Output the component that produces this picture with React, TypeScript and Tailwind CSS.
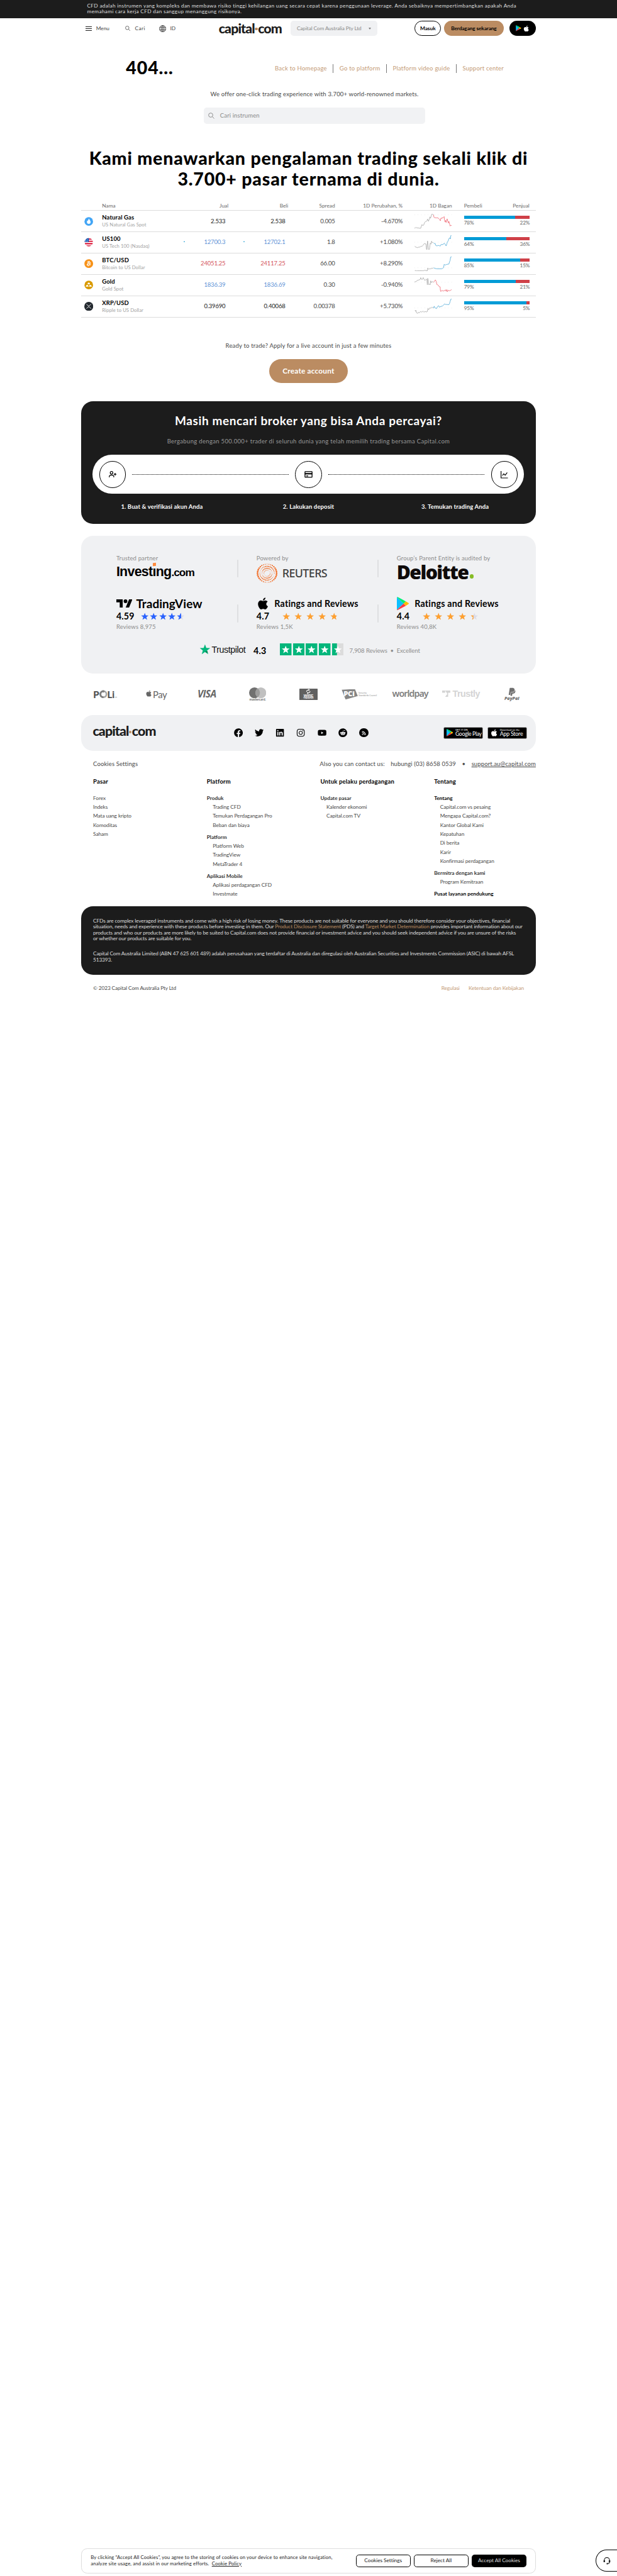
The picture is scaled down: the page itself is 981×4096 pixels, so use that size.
import React from "react";
import { FaApple, FaBitcoin, FaFacebook, FaInstagram, FaLinkedin, FaPaypal, FaReddit, FaRss, FaTwitter, FaYoutube } from "react-icons/fa";

const STAR = "M12 .8l2.9 7.9 8.5.3-6.7 5.2 2.4 8.1L12 17.6l-7.1 4.7 2.4-8.1L.6 9l8.5-.3z";

function Logo() {
  return (
    <div className="flex h-8 w-[170px] items-center whitespace-nowrap text-[36px] leading-8 font-black tracking-[-1.55px] text-[#1c1c1c]">
      capital
      <span className="mx-[1px] mt-1 h-[7px] w-[7px] shrink-0 rounded-full bg-[#bb8c62]" />
      com
    </div>
  );
}

function PlayLogo({ className }: { className: string }) {
  return (
    <svg viewBox="0 0 32 36" className={className}>
      <path d="M0 1v34l18-17z" fill="#0cbfff" />
      <path d="M0 1q1-1.500 3 0l21 11-6 6z" fill="#00ee76" />
      <path d="M0 35q1 1.500 3 0l21-11-6-6z" fill="#ff3a44" />
      <path d="M24 12l7 4.500q2 1.500 0 3L24 24l-6-6z" fill="#ffbc00" />
    </svg>
  );
}

function Search({ className }: { className: string }) {
  return (
    <svg viewBox="0 0 18 18" fill="none" stroke="currentColor" strokeWidth="1.7" className={className}>
      <circle cx="7.200" cy="7.200" r="6" />
      <path d="M11.500 11.500l5.500 5.500" />
    </svg>
  );
}

const charts = [
  {
    dot: 8,
    color: "#ee6470",
    a: "0,113 5,115 12,108 18,113 30,113 36,115 50,116 55,100 60,86 66,94 74,90 80,72 88,62 96,60 100,55 105,42 112,60 118,45 124,24 128,36 134,20 138,4 142,2 146,5 153,8",
    b: "153,8 156,26 160,31 175,32 190,33 200,44 208,56 212,34 218,38 222,30 228,34 238,22 242,55 246,66 250,52 254,70 262,40 268,62 272,74 276,60 282,82 286,98 292,92 298,94",
  },
  {
    dot: 56,
    color: "#4fa9d6",
    a: "3,88 8,95 15,96 22,100 32,96 40,96 48,92 54,88 60,90 66,84 74,72 80,68 92,70 96,110 99,118 102,80 105,46 109,80 112,118 118,118 122,100 126,64 132,72 137,48 142,60 150,58",
    b: "153,62 160,68 166,66 171,82 180,86 190,82 200,84 206,88 212,76 222,74 228,76 236,66 240,64 248,76 254,86 260,70 264,52 270,48 276,28 282,20 288,30 292,2 296,2",
  },
  {
    dot: 90,
    color: "#4fa9d6",
    a: "3,118 8,110 14,116 22,114 40,114 60,113 70,115 80,110 96,112 102,116 106,92 112,102 120,98 130,98 140,94 150,92",
    b: "153,90 165,95 180,98 220,98 226,94 234,88 238,62 246,68 255,64 262,62 276,60 282,40 286,32 290,4 298,2",
  },
  {
    dot: 39,
    color: "#ee6470",
    a: "0,38 6,34 12,36 20,26 30,22 40,20 46,16 50,2 56,16 64,16 70,2 76,14 84,26 90,18 96,14 100,20 103,60 106,8 110,20 114,60 120,54 126,60 130,28 136,42 142,34 152,38",
    b: "153,40 160,32 168,20 174,32 180,58 190,62 200,76 206,76 208,106 212,114 220,104 230,110 242,106 250,100 254,112 260,98 264,116 270,104 280,108 290,104 298,98",
  },
  {
    dot: 74,
    color: "#4fa9d6",
    a: "3,94 8,100 11,92 16,112 24,118 30,110 40,112 50,102 58,108 68,100 76,108 86,102 94,106 102,104 108,78 114,88 122,74 132,76 140,68 150,74",
    b: "153,76 158,60 164,72 176,80 184,64 194,56 200,68 212,62 226,58 234,50 240,42 250,46 260,46 276,48 282,36 286,22 292,4 298,2",
  },
];

function Chart({ i }: { i: number }) {
  const c = charts[i];
  return (
    <svg viewBox="0 0 300 120" className="h-10 w-[100px]" fill="none" strokeWidth="4" strokeLinejoin="round">
      <path d={`M0 ${c.dot}H300`} stroke="#ccc" strokeWidth="3" strokeDasharray="3 24" />
      <polyline points={c.a} stroke="#a6a6a6" />
      <polyline points={c.b} stroke={c.color} />
    </svg>
  );
}

function MarketIcon({ i }: { i: number }) {
  if (i === 2) return <FaBitcoin className="h-6 w-6 text-[#f7931a]" />;
  return (
    <svg viewBox="0 0 24 24" className="h-6 w-6">
      {i === 0 && (
        <>
          <circle cx="12" cy="12" r="11.500" fill="#42a5f5" />
          <path d="M12.500 4c.5 3 4.500 5 4.500 9.500 0 3-2 5-5 5s-5-2-5-5c0-2 1-3 1.700-4.500.6 1 .8 1.500 1.300 2C10 9 11 6.500 12.500 4z" fill="#fff" />
        </>
      )}
      {i === 1 && (
        <>
          <clipPath id="flag">
            <circle cx="12" cy="12" r="11" />
          </clipPath>
          <g clipPath="url(#flag)">
            <path d="M0 0h24v24H0z" fill="#fff" />
            <path d="M0 2h24v3H0zM0 8h24v3H0zM0 14.500h24v3H0zM0 20.500h24v3H0z" fill="#d80027" />
            <path d="M0 0h12v11.500H0z" fill="#0052b4" />
            <path d="M3 4h2v2H3zM7 4h2v2H7zM3 8h2v2H3zM7 8h2v2H7z" fill="#fff" />
          </g>
        </>
      )}
      {i === 3 && (
        <>
          <circle cx="12" cy="12" r="11.500" fill="#d99a00" />
          <path d="M10 6h4l1.500 4h-7zM6 12h4l1.500 4.500h-8zM14 12h4l2.500 4.500h-8z" fill="#fff" />
        </>
      )}
      {i === 4 && (
        <>
          <circle cx="12" cy="12" r="12" fill="#23292f" />
          <path d="M6 6l3.500 3.800q2.500 2.200 5 0L18 6M6 18l3.500-3.800q2.500-2.200 5 0L18 18" fill="none" stroke="#fff" strokeWidth="1.500" />
        </>
      )}
    </svg>
  );
}

const rows = [
  ["Natural Gas", "US Natural Gas Spot", "2.533", "2.538", "0.005", "-4.670%", "78", "22", "text-[#222]"],
  ["US100", "US Tech 100 (Nasdaq)", "12700.3", "12702.1", "1.8", "+1.080%", "64", "36", "text-[#5f93d6]"],
  ["BTC/USD", "Bitcoin to US Dollar", "24051.25", "24117.25", "66.00", "+8.290%", "85", "15", "text-[#d4545b]"],
  ["Gold", "Gold Spot", "1836.39", "1836.69", "0.30", "-0.940%", "79", "21", "text-[#5f93d6]"],
  ["XRP/USD", "Ripple to US Dollar", "0.39690", "0.40068", "0.00378", "+5.730%", "95", "5", "text-[#222]"],
];

const GRID = "grid grid-cols-[56px_179px_159px_160px_125px_181px_132px_224px]";

function Up() {
  return <span className="mt-2 h-0 w-0 border-x-[3px] border-b-[4px] border-x-transparent border-b-[#0a95d0]" />;
}

function Markets() {
  return (
    <section className="mt-[31px] w-[1216px]">
      <div className={`${GRID} h-[26px] items-center border-b border-[#dcdcdc] text-right text-[14px] text-[#6a6a6a]`}>
        <span />
        <span className="text-left">Nama</span>
        <span>Jual</span>
        <span>Beli</span>
        <span>Spread</span>
        <span>1D Perubahan, %</span>
        <span>1D Bagan</span>
        <div className="flex justify-between pr-[17px] pl-8">
          <span>Pembeli</span>
          <span>Penjual</span>
        </div>
      </div>
      {rows.map((r, i) => (
        <div key={r[0]} className={`${GRID} h-[57px] items-center border-b border-[#dcdcdc] text-right text-[16px] tracking-[-0.3px] text-[#484848]`}>
          <div className="pl-2">
            <MarketIcon i={i} />
          </div>
          <div className="pt-[2px] text-left">
            <div className="text-[16px] leading-5 font-bold tracking-[0.2px] text-black">{r[0]}</div>
            <div className="text-[13px] leading-5 tracking-[0.1px] text-[#a3a3a3]">{r[1]}</div>
          </div>
          <div className={`flex justify-between pr-2 pl-[39px] ${r[8]}`}>
            {i === 1 ? <Up /> : <span />}
            {r[2]}
          </div>
          <div className={`flex justify-between pr-2 pl-10 ${r[8]}`}>
            {i === 1 ? <Up /> : <span />}
            {r[3]}
          </div>
          <span>{r[4]}</span>
          <span>{r[5]}</span>
          <div className="flex justify-end">
            <Chart i={i} />
          </div>
          <div className="pr-4 pl-8 text-[14px] text-[#666]">
            <div className="flex h-2 bg-[#cf4048]">
              <div className="bg-[#009bd6]" style={{ width: `${r[6]}%` }} />
            </div>
            <div className="mt-[2px] flex justify-between leading-[18px]">
              <span>{r[6]}%</span>
              <span>{r[7]}%</span>
            </div>
          </div>
        </div>
      ))}
    </section>
  );
}

function Stars({ color, fill, gap }: { color: string; fill: number; gap: string }) {
  return (
    <div className={`flex ${gap}`}>
      {[0, 1, 2, 3, 4].map((i) => (
        <svg key={i} viewBox="0 0 24 23" className="h-5 w-[21px]">
          <path d={STAR} fill="#dcdce6" />
          <clipPath id={`s${color.slice(1)}${Math.round(fill)}${i}`}>
            <path d={`M0 0h${i < 4 ? 24 : fill}v24H0z`} />
          </clipPath>
          <path d={STAR} fill={color} clipPath={`url(#s${color.slice(1)}${Math.round(fill)}${i})`} />
        </svg>
      ))}
    </div>
  );
}

function ReutersMark() {
  const dots: React.ReactNode[] = [];
  const rings = [
    [25.5, 32, 2.3],
    [19.3, 28, 1.7],
    [13.6, 22, 1.6],
    [8.4, 16, 1.1],
  ];
  rings.forEach(([r, n, s], k) => {
    for (let i = 0; i < n; i++) {
      const t = (i / n) * Math.PI * 2;
      const w = k === 0 ? Math.abs(Math.cos(t)) : Math.abs(Math.cos(t - 2.4 + k * 0.5));
      dots.push(<circle key={`${k}-${i}`} cx={28 + r * Math.cos(t)} cy={26 + r * 0.96 * Math.sin(t)} r={s * (0.4 + 0.6 * w)} />);
    }
  });
  return (
    <svg viewBox="0 0 56 52" fill="#f26a21" className="h-[52px] w-14">
      {dots}
    </svg>
  );
}

const RATE = "flex h-8 items-center text-[24px] font-bold text-black";

function Partners() {
  return (
    <section className="mt-8 h-[368px] w-[1216px] rounded-[32px] bg-[#f0f1f3] pt-[50px] text-[16px] tracking-[0.25px] text-[#8c8c8c]">
      <div className="ml-[94px] flex h-[112px]">
        <div className="w-[323px]">
          <div className="h-5 leading-5">Trusted partner</div>
          <div className="mt-[7px] flex h-10 items-center text-[36px] font-bold tracking-[-1.2px] whitespace-nowrap text-black [font-family:'Liberation_Sans',sans-serif]">
            <span>Invest</span>
            <span className="relative">
              ı<span className="absolute top-[3px] left-[1px] h-[8px] w-[8px] -skew-y-6 bg-[#ff8b3d]" />
            </span>
            <span>ng</span>
            <span className="mt-1 text-[29px] tracking-[-1.6px]">.com</span>
          </div>
        </div>
        <div className="mt-[14px] h-12 w-1 rounded bg-[#dedfe1]" />
        <div className="w-[323px] pl-12">
          <div className="h-5 leading-5">Powered by</div>
          <div className="mt-1 flex items-center gap-[13px] text-[30px] leading-[52px] font-medium tracking-[-1px] text-[#404040] [font-family:'Noto_Sans',sans-serif]">
            <ReutersMark />
            REUTERS
          </div>
        </div>
        <div className="mt-[14px] ml-12 h-12 w-1 rounded bg-[#dedfe1]" />
        <div className="pl-12">
          <div className="h-5 leading-5 whitespace-nowrap">Group’s Parent Entity is audited by</div>
          <div className="mt-[6px] flex h-11 items-center text-[51px] leading-[44px] font-extrabold tracking-[-2.7px] text-[#0f0b0b] [font-family:'Open_Sans',sans-serif]">
            Deloitte
            <span className="mt-[22px] ml-1 h-[11px] w-[11px] rounded-full bg-[#86bc25]" />
          </div>
        </div>
      </div>
      <div className="ml-[94px] flex h-[104px]">
        <div className="w-[323px]">
          <div className="mt-[2px] flex h-9 items-center gap-[10px] text-[32px] font-bold tracking-normal whitespace-nowrap text-black">
            <svg viewBox="0 0 43 22" className="h-[22px] w-[43px]">
              <path d="M0 0h17v22H9V8H0zM34 22h-9L34 0h9z" />
              <circle cx="24.500" cy="5" r="5" />
            </svg>
            TradingView
          </div>
          <div className={RATE}>
            <span className="w-[66px]">4.59</span>
            <Stars color="#2962ff" fill={13.5} gap="gap-[3px]" />
          </div>
          <div className="h-6 leading-6">Reviews 8,975</div>
        </div>
        <div className="mt-[22px] h-12 w-1 rounded bg-[#dedfe1]" />
        <div className="w-[323px] pl-12">
          <div className="mt-[2px] flex h-9 items-center text-[24px] font-bold tracking-[0.35px] whitespace-nowrap text-black">
            <FaApple className="mr-[14px] h-9 w-[34px]" />
            Ratings and Reviews
          </div>
          <div className={RATE}>
            <span className="w-[69px]">4.7</span>
            <Stars color="#ffa02f" fill={19} gap="gap-[11px]" />
          </div>
          <div className="h-6 leading-6">Reviews 1,5K</div>
        </div>
        <div className="mt-[22px] ml-12 h-12 w-1 rounded bg-[#dedfe1]" />
        <div className="pl-12">
          <div className="mt-[2px] flex h-9 items-center text-[24px] font-bold tracking-[0.35px] whitespace-nowrap text-black">
            <PlayLogo className="mr-4 h-9 w-8" />
            Ratings and Reviews
          </div>
          <div className={RATE}>
            <span className="w-[69px]">4.4</span>
            <Stars color="#ffa02f" fill={9} gap="gap-[11px]" />
          </div>
          <div className="h-6 leading-6">Reviews 40,8K</div>
        </div>
      </div>
      <div className="mt-[22px] ml-[316px] flex h-8 items-center">
        <svg viewBox="0 0 24 23" className="h-7 w-[30px]">
          <path d={STAR} fill="#04b67b" />
          <path d="M12 17.600l5.500-1.500.6 2.500z" fill="#005128" />
        </svg>
        <span className="mt-1 ml-[3px] w-[112px] text-[24px] tracking-[-0.7px] text-[#111] [font-family:'Liberation_Sans',sans-serif]">Trustpilot</span>
        <span className="mt-2 w-[71px] text-[24px] font-bold text-black">4.3</span>
        <div className="flex gap-[3.7px]">
          {[0, 1, 2, 3, 4].map((i) => (
            <svg key={i} viewBox="0 0 31 32" className="h-8 w-[31px]">
              <path d="M0 0h31v32H0z" fill={i < 4 ? "#04b67b" : "#dcdcdc"} />
              {i === 4 && <path d="M0 0h13v32H0z" fill="#04b67b" />}
              <path d={STAR} transform="translate(4.500 5.500) scale(.92)" fill="#fff" />
            </svg>
          ))}
        </div>
        <span className="mt-2 ml-4 flex gap-2 tracking-[-0.1px]">
          <span>7,908 Reviews</span>
          <span>•</span>
          <span>Excellent</span>
        </span>
      </div>
    </section>
  );
}

function Payments() {
  return (
    <section className="mt-[32px] flex h-12 w-[1224px] items-center">
      <div className="flex w-[136px] items-center justify-center text-[25px] font-black text-[#4f4f4f]">
        P
        <svg viewBox="0 0 22 22" className="h-[22px] w-[22px]" fill="none">
          <circle cx="11" cy="11.500" r="8" stroke="#a6a6a6" strokeWidth="4.500" />
          <path d="M11 19.500a8 8 0 0 1-1-16" stroke="#7d7d7d" strokeWidth="4.500" />
          <path d="M9 0l6 3-5 5z" fill="#7d7d7d" />
        </svg>
        Li
        <span className="mt-4 text-[4px]">TM</span>
      </div>
      <div className="flex w-[136px] items-center justify-center text-[25px] tracking-[-0.8px] text-[#666]">
        <FaApple className="mr-[2px] mb-1 h-[19px] w-[19px]" />
        Pay
      </div>
      <div className="flex w-[136px] items-center justify-center text-[26px] font-bold tracking-[-1px] text-[#666] italic [font-family:'Open_Sans',sans-serif]">
        VISA
      </div>
      <div className="flex w-[136px] flex-col items-center text-[8.5px] leading-[8px] font-bold text-[#666]">
        <svg viewBox="0 0 46 29" className="h-[29px] w-[46px]">
          <circle cx="14.500" cy="14.500" r="14.500" fill="#707070" />
          <circle cx="31.500" cy="14.500" r="14.500" fill="#c0c0c0" />
          <path d="M23 2.700a14.500 14.500 0 0 1 0 23.600 14.500 14.500 0 0 1 0-23.600z" fill="#9c9c9c" />
        </svg>
        mastercard.
      </div>
      <div className="flex w-[136px] justify-center">
        <div className="flex h-[31px] w-[50px] flex-col items-center rounded-[1px] bg-[#606060] pt-px text-white">
          <svg viewBox="0 0 14 16" className="h-[15px] w-[14px]" fill="none" stroke="#fff" strokeWidth="2">
            <path d="M2 9q0-5 7-5.500M12 7q0 5-7 5.500" />
            <path d="M8 1l3 2.500-3 2.500zM6 10l-3 2.500L6 15z" fill="#fff" strokeWidth="1" />
          </svg>
          <span className="text-[10px] leading-[9px] font-bold [font-family:'Liberation_Sans',sans-serif]">WIRE</span>
          <span className="text-[5px] leading-[5px] font-bold [font-family:'Liberation_Sans',sans-serif]">TRANSFER</span>
        </div>
      </div>
      <div className="flex w-[136px] items-center justify-center">
        <div className="h-[28px] w-[43px] shrink-0 bg-[#868686] pt-[5px] pl-[5px] text-[19px] leading-[18px] font-extrabold tracking-[-0.5px] text-white [clip-path:polygon(0_7%,82%_0,100%_67%,24%_100%)] [font-family:'Open_Sans',sans-serif]">
          PCi
        </div>
        <div className="ml-[2px] text-[5.8px] leading-[6.5px] whitespace-nowrap text-[#868686] [font-family:'Noto_Sans',sans-serif]">
          Security
          <br />
          Standards Council
        </div>
      </div>
      <div className="flex w-[136px] items-center justify-center pb-1 text-[24px] font-semibold tracking-[-1.6px] text-[#7f7f7f] [font-family:'Noto_Sans',sans-serif]">
        worldpay
      </div>
      <div className="flex w-[136px] items-center justify-center gap-[6px] pb-[2px] text-[24px] font-bold tracking-[-0.8px] text-[#d4d4d4] [font-family:'Liberation_Sans',sans-serif]">
        <svg viewBox="0 0 22 17" className="h-[17px] w-[22px]" fill="currentColor">
          <path d="M0 0h8v6H0zM8 0h14v6h-6v11H8l6-8z" />
        </svg>
        Trustly
      </div>
      <div className="flex w-[136px] flex-col items-center text-[#707070]">
        <FaPaypal className="h-[24px] w-[24px]" />
        <span className="text-[12px] leading-[12px] font-extrabold italic [font-family:'Open_Sans',sans-serif]">PayPal</span>
      </div>
    </section>
  );
}

function SocialBar() {
  return (
    <section className="mt-8 flex h-[95px] w-[1216px] items-center rounded-[32px] bg-[#f0f1f3] pr-6 pl-[31px]">
      <div className="mb-2 w-[377px]">
        <Logo />
      </div>
      <div className="flex gap-8 text-black">
        <FaFacebook className="h-6 w-6" />
        <FaTwitter className="h-6 w-6" />
        <FaLinkedin className="h-6 w-6" />
        <FaInstagram className="h-6 w-6" />
        <FaYoutube className="h-6 w-6" />
        <FaReddit className="h-6 w-6" />
        <div className="flex h-6 w-6 items-center justify-center rounded-full bg-black">
          <FaRss className="h-3 w-3 text-white" />
        </div>
      </div>
      <div className="ml-auto flex gap-[11px] text-white">
        <div className="flex h-8 w-[106px] items-center gap-[6px] rounded-[4px] border border-[#a6a6a6] bg-black pl-[6px]">
          <PlayLogo className="h-5 w-[18px]" />
          <div className="whitespace-nowrap">
            <div className="text-[7px] leading-[8px]">GET IT ON</div>
            <div className="text-[14.5px] leading-[15px] tracking-[-0.5px]">Google Play</div>
          </div>
        </div>
        <div className="flex h-8 w-[106px] items-center gap-[6px] rounded-[4px] border border-[#a6a6a6] bg-black pl-[7px]">
          <FaApple className="h-[21px] w-[19px]" />
          <div className="whitespace-nowrap">
            <div className="text-[7px] leading-[8px]">Download on the</div>
            <div className="text-[15px] leading-[15px] tracking-[-0.4px]">App Store</div>
          </div>
        </div>
      </div>
    </section>
  );
}

function Group({ title, items, dark }: { title: string; items: string[]; dark?: boolean }) {
  return (
    <div className="mb-2">
      <div className={dark ? "font-bold tracking-normal text-black" : "font-bold tracking-normal text-[#333]"}>{title}</div>
      {items.map((t) => (
        <div key={t} className="pl-4">
          {t}
        </div>
      ))}
    </div>
  );
}

function FooterLinks() {
  return (
    <section className="w-[1216px] pl-8 text-[#484848]">
      <div className="flex h-[72px] items-center text-[16px] tracking-[0.2px]">
        <span>Cookies Settings</span>
        <span className="ml-auto">Also you can contact us:</span>
        <span className="ml-4">hubungi (03) 8658 0539</span>
        <span className="mx-4">•</span>
        <span className="underline">support.au@capital.com</span>
      </div>
      <div className="grid grid-cols-[304px_304px_304px_272px] text-[16px] leading-6 font-bold tracking-[0.3px] text-black">
        <span>Pasar</span>
        <span>Platform</span>
        <span>Untuk pelaku perdagangan</span>
        <span>Tentang</span>
      </div>
      <div className="mt-[19px] grid h-[301px] grid-cols-[304px_304px_304px_272px] text-[14px] leading-6 tracking-[-0.15px]">
        <div>
          {["Forex", "Indeks", "Mata uang kripto", "Komoditas", "Saham"].map((t) => (
            <div key={t}>{t}</div>
          ))}
        </div>
        <div>
          <Group title="Produk" items={["Trading CFD", "Temukan Perdagangan Pro", "Beban dan biaya"]} />
          <Group title="Platform" items={["Platform Web", "TradingView", "MetaTrader 4"]} />
          <Group title="Aplikasi Mobile" items={["Aplikasi perdagangan CFD", "Investmate"]} />
        </div>
        <div>
          <Group title="Update pasar" items={["Kalender ekonomi", "Capital.com TV"]} />
        </div>
        <div>
          <Group
            dark
            title="Tentang"
            items={["Capital.com vs pesaing", "Mengapa Capital.com?", "Kantor Global Kami", "Kepatuhan", "Di berita", "Karir", "Konfirmasi perdagangan"]}
          />
          <Group title="Bermitra dengan kami" items={["Program Kemitraan"]} />
          <Group dark title="Pusat layanan pendukung" items={[]} />
        </div>
      </div>
    </section>
  );
}

const CIRCLE = "flex h-[72px] w-[72px] items-center justify-center rounded-full border-2 border-black";

function Steps() {
  return (
    <section className="mt-12 flex h-[328px] w-[1216px] flex-col items-center rounded-[32px] bg-[#1c1c1c] text-white">
      <h2 className="mt-8 text-[32px] leading-10 font-bold tracking-[1px]">Masih mencari broker yang bisa Anda percayai?</h2>
      <p className="mt-6 text-[16px] leading-6 tracking-[0.55px] text-[#999]">
        Bergabung dengan 500.000+ trader di seluruh dunia yang telah memilih trading bersama Capital.com
      </p>
      <div className="mt-6 flex h-[104px] w-[1154px] items-center justify-between rounded-full bg-white px-[17px] text-black">
        <div className={CIRCLE}>
          <svg viewBox="0 0 24 24" className="h-6 w-6" fill="none" stroke="currentColor" strokeWidth="2">
            <circle cx="9" cy="8" r="3.500" />
            <path d="M3 20v-2q0-4 6-4t6 4v2M15 12h7M18.500 8.500v7" />
          </svg>
        </div>
        <div className="w-[418px] border-t-2 border-dotted border-black" />
        <div className={CIRCLE}>
          <svg viewBox="0 0 24 20" className="h-[18px] w-[22px]" fill="none" stroke="currentColor" strokeWidth="2.500">
            <rect x="1.500" y="1.500" width="21" height="17" rx="1" />
            <path d="M1 8h22" strokeWidth="4" />
            <path d="M5 14.500h6" />
          </svg>
        </div>
        <div className="w-[418px] border-t-2 border-dotted border-black" />
        <div className={CIRCLE}>
          <svg viewBox="0 0 24 24" className="h-[22px] w-[22px]" fill="none" stroke="currentColor" strokeWidth="2.200">
            <path d="M3 2v20h20M7 15l4-5 4 4 6-8" />
          </svg>
        </div>
      </div>
      <div className="mt-6 grid w-[1176px] grid-cols-3 text-center text-[16px] leading-6 font-bold tracking-[0.2px]">
        <span>1. Buat &amp; verifikasi akun Anda</span>
        <span>2. Lakukan deposit</span>
        <span>3. Temukan trading Anda</span>
      </div>
    </section>
  );
}

function Header() {
  return (
    <header className="flex h-14 w-[1216px] items-center text-[14px] text-[#444]">
      <div className="ml-[11px] flex h-3 w-[18px] flex-col justify-between">
        <span className="h-[2px] bg-[#222]" />
        <span className="h-[2px] bg-[#222]" />
        <span className="h-[2px] bg-[#222]" />
      </div>
      <span className="ml-[11px] w-[77px]">Menu</span>
      <Search className="mr-[13px] h-[14px] w-[14px]" />
      <span className="w-[64px] tracking-[0.7px]">Cari</span>
      <svg viewBox="0 0 20 20" className="mr-[11px] h-[19px] w-[19px]" fill="none" stroke="currentColor" strokeWidth="1.600">
        <circle cx="10" cy="10" r="9" />
        <ellipse cx="10" cy="10" rx="4" ry="9" />
        <path d="M1.500 7h17M1.500 13h17M10 1v18" />
      </svg>
      <span className="w-[130px]">ID</span>
      <Logo />
      <div className="ml-[23px] flex h-10 w-[231px] items-center justify-between rounded-lg bg-[#f0f1f3] px-4 tracking-[-0.2px] whitespace-nowrap text-[#8a8a8a]">
        Capital Com Australia Pty Ltd
        <span className="h-0 w-0 border-x-[5px] border-t-[6px] border-x-transparent border-t-[#808080]" />
      </div>
      <div className="ml-[100px] flex h-10 w-[71px] items-center justify-center rounded-[20px] border border-black font-bold text-black">Masuk</div>
      <div className="ml-2 flex h-10 w-[159px] items-center justify-center rounded-[20px] bg-[#bb8c62] font-bold tracking-[-0.2px] text-black">Berdagang sekarang</div>
      <div className="ml-4 flex h-10 w-[70px] items-center justify-center gap-[6px] rounded-[20px] bg-black">
        <PlayLogo className="h-4 w-[15px]" />
        <FaApple className="h-[18px] w-4 text-white" />
      </div>
    </header>
  );
}

export default function App() {
  return (
    <div className="h-[4096px] w-[981px] overflow-hidden bg-white [font-family:Lato,sans-serif]">
      <div className="flex h-[6891px] w-[1650px] flex-col items-center [zoom:0.5945]">
        <div className="flex h-12 w-full shrink-0 justify-center bg-[#1c1c1c] pt-2 text-[14px] leading-4 tracking-[0.5px] text-[#dedede]">
          <p className="w-[1184px] whitespace-nowrap">
            CFD adalah instrumen yang kompleks dan membawa risiko tinggi kehilangan uang secara cepat karena penggunaan leverage. Anda sebaiknya mempertimbangkan apakah Anda
            <br />
            memahami cara kerja CFD dan sanggup menanggung risikonya.
          </p>
        </div>
        <Header />
        <section className="mt-12 flex h-[56px] w-[1216px] items-center pl-[120px]">
          <h1 className="w-[398px] text-[48px] font-black tracking-[1.5px] text-black">404...</h1>
          <nav className="mt-2 flex h-6 items-center divide-x divide-[#777] text-[16px] leading-6 tracking-[0.4px] text-[#c39a75]">
            <span className="pr-4">Back to Homepage</span>
            <span className="px-4">Go to platform</span>
            <span className="px-4">Platform video guide</span>
            <span className="pl-4">Support center</span>
          </nav>
        </section>
        <p className="mt-8 ml-8 text-[16px] leading-6 tracking-[0.28px] text-[#484848]">We offer one-click trading experience with 3.700+ world-renowned markets.</p>
        <div className="mt-6 mr-[-32px] flex h-11 w-[591px] items-center gap-[14px] self-center rounded-lg bg-[#f1f2f4] pl-3 text-[16px] tracking-[0.2px] text-[#8a8a8a]">
          <Search className="h-[17px] w-[17px]" />
          Cari instrumen
        </div>
        <h2 className="mt-[63px] text-center text-[48px] leading-[56px] font-black tracking-[1.35px] text-black">
          Kami menawarkan pengalaman trading sekali klik di
          <br />
          3.700+ pasar ternama di dunia.
        </h2>
        <Markets />
        <p className="mt-16 text-[16px] leading-6 tracking-[0.3px] text-[#484848]">Ready to trade? Apply for a live account in just a few minutes</p>
        <div className="mt-6 flex h-16 w-[210px] items-center justify-center rounded-[32px] bg-[#bb8c62] text-[20px] font-bold tracking-[0.3px] text-white">
          Create account
        </div>
        <Steps />
        <Partners />
        <Payments />
        <SocialBar />
        <FooterLinks />
        <section className="h-[184px] w-[1216px] rounded-[32px] bg-[#1c1c1c] pt-8 pl-8 text-[14px] leading-4 tracking-[-0.22px] whitespace-nowrap text-[#dedede]">
          <p>
            CFDs are complex leveraged instruments and come with a high risk of losing money. These products are not suitable for everyone and you should therefore consider your objectives, financial
            <br />
            situation, needs and experience with these products before investing in them. Our <span className="text-[#bb8c62]">Product Disclosure Statement</span> (PDS) and{" "}
            <span className="text-[#bb8c62]">Target Market Determination</span> provides important information about our
            <br />
            products and who our products are more likely to be suited to Capital.com does not provide financial or investment advice and you should seek independent advice if you are unsure of the risks
            <br />
            or whether our products are suitable for you.
          </p>
          <p className="mt-6">
            Capital Com Australia Limited (ABN 47 625 601 489) adalah perusahaan yang terdaftar di Australia dan diregulasi oleh Australian Securities and Investments Commission (ASIC) di bawah AFSL
            <br />
            513393.
          </p>
        </section>
        <div className="mt-6 flex h-6 w-[1152px] items-center text-[14px] tracking-[-0.22px] text-[#484848]">
          <span>© 2023 Capital Com Australia Pty Ltd</span>
          <span className="ml-auto text-[#c39a75]">Regulasi</span>
          <span className="ml-6 text-[#c39a75]">Ketentuan dan Kebijakan</span>
        </div>
        <div className="mt-auto mb-2 flex w-full items-center pl-[217px] text-[13px] text-[#222]">
          <div className="flex h-[68px] w-[1216px] items-center rounded-2xl border border-[#ddd] pl-6 text-[13px]">
            <p className="w-[709px] leading-4 tracking-[0.22px] whitespace-nowrap">
              By clicking “Accept All Cookies”, you agree to the storing of cookies on your device to enhance site navigation,
              <br />
              analyze site usage, and assist in our marketing efforts. &nbsp;<span className="underline">Cookie Policy</span>
            </p>
            <div className="flex gap-[9px] text-[14px] tracking-[-0.1px]">
              <div className="flex h-[34px] w-[146px] items-center justify-center rounded-lg border border-black">Cookies Settings</div>
              <div className="flex h-[34px] w-[146px] items-center justify-center rounded-lg border border-black">Reject All</div>
              <div className="flex h-[34px] w-[146px] items-center justify-center rounded-lg bg-black text-[#dedede]">Accept All Cookies</div>
            </div>
          </div>
          <div className="ml-auto flex h-[58px] w-[57px] items-center rounded-l-full border border-r-0 border-black pl-[19px]">
            <svg viewBox="0 0 20 20" className="h-5 w-5" fill="none" stroke="currentColor" strokeWidth="2">
              <path d="M3 12V8a7 7 0 0 1 14 0v6q0 3-5 3.500" />
              <path d="M3 8.500v5M17 8.500v5" strokeWidth="4" />
              <circle cx="11" cy="17.500" r="1" />
            </svg>
          </div>
        </div>
      </div>
    </div>
  );
}
